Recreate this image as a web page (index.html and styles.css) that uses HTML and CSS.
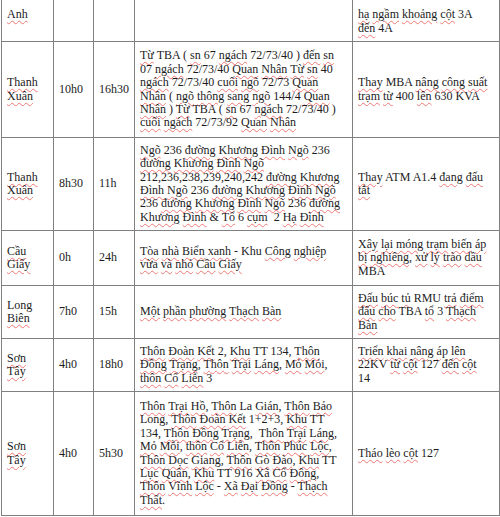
FILE: index.html
```html
<!DOCTYPE html>
<html lang="vi">
<head>
<meta charset="utf-8">
<link rel="stylesheet" href="styles.css">
</head>
<body>
<table class="sched">
  <colgroup>
    <col class="c-area"><col class="c-from"><col class="c-to"><col class="c-place"><col class="c-work">
  </colgroup>
  <tr class="r1">
    <td class="top"><u>Anh</u></td>
    <td></td>
    <td></td>
    <td></td>
    <td class="top"><u>hạ</u> <u>ngầm</u> <u>khoảng</u> <u>cột</u> 3A<br><u>đến</u> 4A</td>
  </tr>
  <tr class="r2">
    <td><u>Thanh</u><br><u>Xuân</u></td>
    <td class="ctr">10h0</td>
    <td class="ctr">16h30</td>
    <td><u>Từ</u> TBA ( <u>sn</u> 67 <u>ngách</u> 72/73/40 ) <u>đến</u> <u>sn</u><br>07 <u>ngách</u> 72/73/40 <u>Quan</u> <u>Nhân</u> <u>Từ</u> <u>sn</u> 40<br><u>ngách</u> 72/73/40 <u>cuối</u> <u>ngõ</u> 72/73 <u>Quan</u><br><u>Nhân</u> ( <u>ngõ</u> <u>thông</u> <u>sang</u> <u>ngõ</u> 144/4 <u>Quan</u><br><u>Nhân</u> ) <u>Từ</u> TBA ( <u>sn</u> 67 <u>ngách</u> 72/73/40 )<br><u>cuối</u> <u>ngách</u> 72/73/92 <u>Quan</u> <u>Nhân</u></td>
    <td><u>Thay</u> MBA <u>nâng</u> <u>công</u> <u>suất</u><br><u>trạm</u> <u>từ</u> 400 <u>lên</u> 630 KVA</td>
  </tr>
  <tr class="r3">
    <td><u>Thanh</u><br><u>Xuân</u></td>
    <td>8h30</td>
    <td>11h</td>
    <td><u>Ngõ</u> 236 <u>đường</u> <u>Khương</u> <u>Đình</u> <u>Ngõ</u> 236<br><u>đường</u> <u>Khương</u> <u>Đình</u> <u>Ngõ</u><br>212,236,238,239,240,242 <u>đường</u> <u>Khương</u><br><u>Đình</u> <u>Ngõ</u> 236 <u>đường</u> <u>Khương</u> <u>Đình</u> <u>Ngõ</u><br>236 <u>đường</u> <u>Khương</u> <u>Đình</u> <u>Ngõ</u> 236 <u>đường</u><br><u>Khương</u> <u>Đình</u> &amp; <u>Tổ</u> 6 <u>cụm</u>&nbsp; 2 <u>Hạ</u> <u>Đình</u></td>
    <td><u>Thay</u> ATM A1.4 <u>đang</u> <u>đấu</u><br><u>tắt</u></td>
  </tr>
  <tr class="r4">
    <td><u>Cầu</u><br><u>Giấy</u></td>
    <td>0h</td>
    <td>24h</td>
    <td><u>Tòa</u> <u>nhà</u> <u>Biển</u> <u>xanh</u> - Khu <u>Công</u> <u>nghiệp</u><br><u>vừa</u> <u>và</u> <u>nhỏ</u> <u>Cầu</u> <u>Giấy</u></td>
    <td><u>Xây</u> <u>lại</u> <u>móng</u> <u>trạm</u> <u>biến</u> <u>áp</u><br><u>bị</u> <u>nghiêng</u>, <u>xử</u> <u>lý</u> <u>trào</u> <u>dầu</u><br>MBA</td>
  </tr>
  <tr class="r5">
    <td>Long<br><u>Biên</u></td>
    <td>7h0</td>
    <td>15h</td>
    <td><u>Một</u> <u>phần</u> <u>phường</u> <u>Thạch</u> <u>Bàn</u></td>
    <td><u>Đấu</u> <u>búc</u> <u>tủ</u> RMU <u>trả</u> <u>điểm</u><br><u>đấu</u> <u>cho</u> TBA <u>tổ</u> 3 <u>Thạch</u><br><u>Bàn</u></td>
  </tr>
  <tr class="r6">
    <td><u>Sơn</u><br><u>Tây</u></td>
    <td>4h0</td>
    <td>18h0</td>
    <td><u>Thôn</u> <u>Đoàn</u> <u>Kết</u> 2, <u>Khu</u> TT 134, <u>Thôn</u><br><u>Đồng</u> <u>Trạng</u>, <u>Thôn</u> <u>Trại</u> <u>Láng</u>, <u>Mỏ</u> <u>Mỏi</u>,<br><u>thôn</u> <u>Cổ</u> <u>Liễn</u> 3</td>
    <td><u>Triển</u> <u>khai</u> <u>nâng</u> <u>áp</u> <u>lên</u><br>22KV <u>từ</u> <u>cột</u> 127 <u>đến</u> <u>cột</u><br>14</td>
  </tr>
  <tr class="r7">
    <td><u>Sơn</u><br><u>Tây</u></td>
    <td>4h0</td>
    <td>5h30</td>
    <td><u>Thôn</u> <u>Trại</u> <u>Hồ</u>, <u>Thôn</u> La <u>Gián</u>, <u>Thôn</u> <u>Bảo</u><br>Long, <u>Thôn</u> <u>Đoàn</u> <u>Kết</u> 1+2+3, <u>Khu</u> TT<br>134, <u>Thôn</u> <u>Đồng</u> <u>Trạng</u>,&nbsp; <u>Thôn</u> <u>Trại</u> <u>Láng</u>,<br><u>Mỏ</u> <u>Mỗi</u>, <u>thôn</u> <u>Cổ</u> <u>Liễn</u>, <u>Thôn</u> <u>Phúc</u> <u>Lộc</u>,<br><u>Thôn</u> <u>Dọc</u> <u>Giang</u>, <u>Thôn</u> <u>Gò</u> <u>Đào</u>, <u>Khu</u> TT<br><u>Lục</u> <u>Quân</u>, <u>Khu</u> TT 916 <u>Xã</u> <u>Cổ</u> <u>Đông</u>,<br><u>Thôn</u> <u>Vĩnh</u> <u>Lộc</u> - <u>Xã</u> <u>Đại</u> <u>Đồng</u> - <u>Thạch</u><br><u>Thất</u>.</td>
    <td><u>Tháo</u> <u>lèo</u> <u>cột</u> 127</td>
  </tr>
</table>
</body>
</html>
```

FILE: styles.css
```css
html, body {
  margin: 0;
  padding: 0;
  background: #ffffff;
}

body {
  padding-left: 1px;
  font-family: "Liberation Serif", "Times New Roman", serif;
  font-size: 12px;
  line-height: 13.4px;
  color: #1c1c1c;
}

.sched {
  border-collapse: collapse;
  table-layout: fixed;
  width: 498px;
}

.c-area { width: 52px; }
.c-from { width: 40px; }
.c-to { width: 41px; }
.c-place { width: 218px; }
.c-work { width: 147px; }

.sched td {
  border: 1px solid #808080;
  padding: 0 4px 0 5px;
  vertical-align: middle;
  white-space: nowrap;
}

.r1 td {
  border-top: 0;
  height: 34px;
  vertical-align: top;
  padding-top: 7px;
  line-height: 14px;
}

.r2 td { height: 95px; }
.r3 td { height: 92px; }
.r4 td { height: 54px; }
.r5 td { height: 52px; }
.r6 td { height: 52px; }
.r7 td { height: 123px; }

u {
  text-decoration: underline wavy #ee7777;
  text-decoration-thickness: 1px;
  text-underline-offset: 2px;
}
```
